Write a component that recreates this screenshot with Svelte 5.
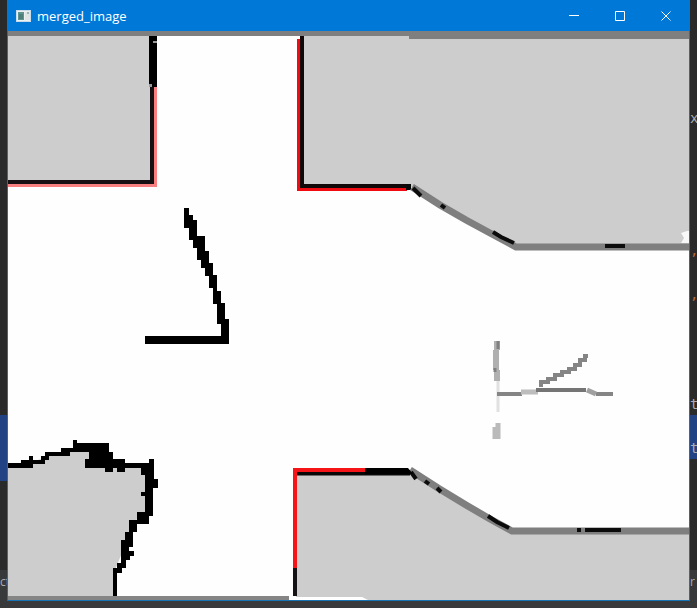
<script>
  const leftLines = Array.from({ length: 24 }, (_, i) => ({ text: '', selected: i >= 18 && i <= 20 }));
  const rightText = { 4: 'x', 10: ',', 12: ',', 17: 't', 19: 't' };
  const rightLines = Array.from({ length: 24 }, (_, i) => ({
    text: rightText[i] ?? '',
    selected: i === 18 || i === 19
  }));
</script>

<div class="desktop">
  <div class="gutter">
    <div class="code">
      {#each leftLines as line}
        <div class="line" class:selected={line.selected}>{line.text}</div>
      {/each}
    </div>
    <div class="status">ct</div>
  </div>

  <main class="window">
    <header class="titlebar">
      <svg class="app" viewBox="0 0 16 14" aria-hidden="true">
        <rect x="0.5" y="1.5" width="14" height="11" fill="#eef1f1" stroke="#c9dbe8" />
        <rect x="2" y="3" width="6" height="8" fill="#5f9590" />
        <rect x="3" y="5" width="4" height="5" fill="#4e7f78" />
        <rect x="9" y="3" width="5" height="8" fill="#dfe6e4" />
        <rect x="11" y="3" width="2" height="2" fill="#9ab5b5" />
      </svg>
      <h1>merged_image</h1>
      <div class="controls">
        <button aria-label="Minimize"><svg viewBox="0 0 12 12"><path d="M1 5.5H11" /></svg></button>
        <button aria-label="Maximize"><svg viewBox="0 0 12 12"><path d="M1.5 1.5H10.5V10.5H1.5Z" /></svg></button>
        <button aria-label="Close"><svg viewBox="0 0 12 12"><path d="M1.5 1.5L10.5 10.5M10.5 1.5L1.5 10.5" /></svg></button>
      </div>
    </header>

    <svg class="map" viewBox="8 31 681 569" preserveAspectRatio="none" role="img" aria-label="Merged map">
      <defs>
        <filter id="smooth" filterUnits="userSpaceOnUse" x="0" y="20" width="700" height="590" color-interpolation-filters="sRGB">
          <feGaussianBlur stdDeviation="0.7" />
        </filter>
      </defs>
      <rect x="8" y="31" width="681" height="569" fill="#fefefe" />
      <g filter="url(#smooth)">
        <g fill="#cdcdcd">
          <path d="M2 35H152V182H2Z" />
          <path d="M303 35H696V246H516L412 187H303Z" />
          <path d="M296 472H410L512 530H696V606H368L362 597H296Z" />
          <path d="M2 466L20 465L38 460L58 453L75 448L95 450L100 462L118 466L146 466V512L136 520L124 548L115 570V597H2Z" />
        </g>
        <path d="M2 25H696V39H409V36H2Z" fill="#7f7f7f" />
        <path d="M2 596H289V606H2Z" fill="#858585" />
        <path d="M289 597H362L368 600V606H289Z" fill="#fff" />
        <path d="M681 233L687 231H696V243H681L684 238Z" fill="#fff" opacity=".85" />

        <path d="M2 185H155V87" fill="none" stroke="#f77f7f" stroke-width="4" />
        <path d="M2 182H152V87" fill="none" stroke="#171012" stroke-width="4" />
        <path d="M149 36H157V87H151V85H149Z" fill="#000" />
        <path d="M153 41h4v2h-4zM149 84h3v3h-3z" fill="#999" />

        <path d="M299 39V189H407" fill="none" stroke="#f00b12" stroke-width="4" />
        <path d="M302 36V186H410" fill="none" stroke="#120708" stroke-width="4" />
        <path d="M406 184H411V190H406Z" fill="#080808" />
        <path d="M412 187L440 205L466 220L490 233L516 247H696" fill="none" stroke="#7f7f7f" stroke-width="7" />
        <path d="M413 188L421 196M441 205L445 208M493 232L501 237L514 243M605 246H625" fill="none" stroke="#0c0c0c" stroke-width="4" />

        <path d="M410 470L438 488L466 505L490 519L512 531H696" fill="none" stroke="#7f7f7f" stroke-width="7" />
        <path d="M411 472L416 479M425 481L429 484M437 488L441 492M488 516L497 522L509 528M577 530H581M585 530H621" fill="none" stroke="#0b0b0b" stroke-width="4" />
        <path d="M295 473H410" fill="none" stroke="#080808" stroke-width="5" />
        <path d="M365 468H408L413 474H365Z" fill="#000" />
        <path d="M295 568V470H365" fill="none" stroke="#f51519" stroke-width="4" />
        <path d="M295 568V596" fill="none" stroke="#151114" stroke-width="4" />

        <path
          d="M184 208H189V215H193V220H197V236H205V251H209V263H213V275H217V291H221V303H225V319H229V344H145V336H221V324H217V304H213V288H209V276H205V268H201V260H197V248H193V240H189V228H184Z"
          fill="#000"
        />

        <g fill="none" stroke="#858585">
          <path d="M497 341V350M496 350V370M497 370V381" stroke="#b0b0b0" stroke-width="6" />
          <path d="M498 341V349M495 368V372" stroke="#808080" stroke-width="3" />
          <path d="M498 381V412" stroke="#e1e1e1" stroke-width="3" />
          <path d="M498 423V439M495 427V439" stroke="#bababa" stroke-width="5" />
          <path d="M497 394H522M596 394H613" stroke-width="4" />
          <path d="M521 392H538" stroke="#bdbdbd" stroke-width="5" />
          <path d="M536 390H586" stroke="#757575" stroke-width="4" />
          <path d="M587 390L596 394" stroke="#a0a0a0" stroke-width="5" />
          <path d="M541 387V382H548V379H555V375H562V372H569V369H575V365H580V360H585V356H588" stroke-width="4" />
        </g>

        <path
          d="M2 463H21V460H29V456H33V460H41V456H45V452H61V448H73V440H77V443H109V452H113V459H125V463H149V459H154V479H158V488H153V516H149V524H137V532H133V547H129V551H134V556H130V560H126V568H122V573H117V596H113V568H117V563H121V540H125V532H129V520H137V512H145V496H141V492H145V475H141V468H125V472H117V468H113V472H105V468H85V459H89V452H70V456H49V460H45V464H33V468H2Z"
          fill="#000"
        />
      </g>
    </svg>
  </main>

  <div class="gutter right">
    <div class="code">
      {#each rightLines as line}
        <div class="line" class:selected={line.selected} class:punct={line.text === ','}>{line.text}</div>
      {/each}
    </div>
    <div class="status">r</div>
  </div>
</div>

<style>
  :global(body) {
    margin: 0;
    background: #2b2b2b;
  }
  .desktop {
    display: grid;
    grid-template-columns: 7px minmax(0, 1fr) 7px;
    height: 100vh;
    overflow: hidden;
    background: #39393c;
  }
  .gutter {
    display: flex;
    flex-direction: column;
    min-height: 0;
    overflow: hidden;
    background: #2a2a2b;
    color: #a9adb2;
    font: 14px/22px "DejaVu Sans Mono", monospace;
  }
  .code {
    flex: 1;
    min-height: 0;
    padding-top: 19px;
    overflow: hidden;
  }
  .line {
    height: 22px;
  }
  .selected {
    background: #214283;
  }
  .punct {
    color: #b56a32;
  }
  .status {
    height: 38px;
    background: #38393b;
    font: 12px/24px "Open Sans", sans-serif;
  }
  .window {
    display: flex;
    flex-direction: column;
    min-width: 0;
    min-height: 0;
    margin-bottom: 7px;
    box-sizing: border-box;
    border: 1px solid #1673b5;
    border-top: 0;
  }
  .titlebar {
    display: flex;
    flex: none;
    align-items: center;
    height: 31px;
    padding-left: 8px;
    background: #0078d7;
    color: #fff;
  }
  .app {
    width: 16px;
    height: 14px;
  }
  h1 {
    flex: 1;
    margin: 0 0 0 5px;
    font: 400 13px/30px "Open Sans", sans-serif;
  }
  .controls {
    display: flex;
  }
  button {
    display: grid;
    place-items: center;
    width: 46px;
    height: 30px;
    padding: 0;
    border: 0;
    background: none;
  }
  button svg {
    width: 12px;
    height: 12px;
    fill: none;
    stroke: #fff;
    stroke-width: 1;
  }
  .map {
    display: block;
    flex: 1;
    width: 100%;
    min-height: 0;
  }
</style>
